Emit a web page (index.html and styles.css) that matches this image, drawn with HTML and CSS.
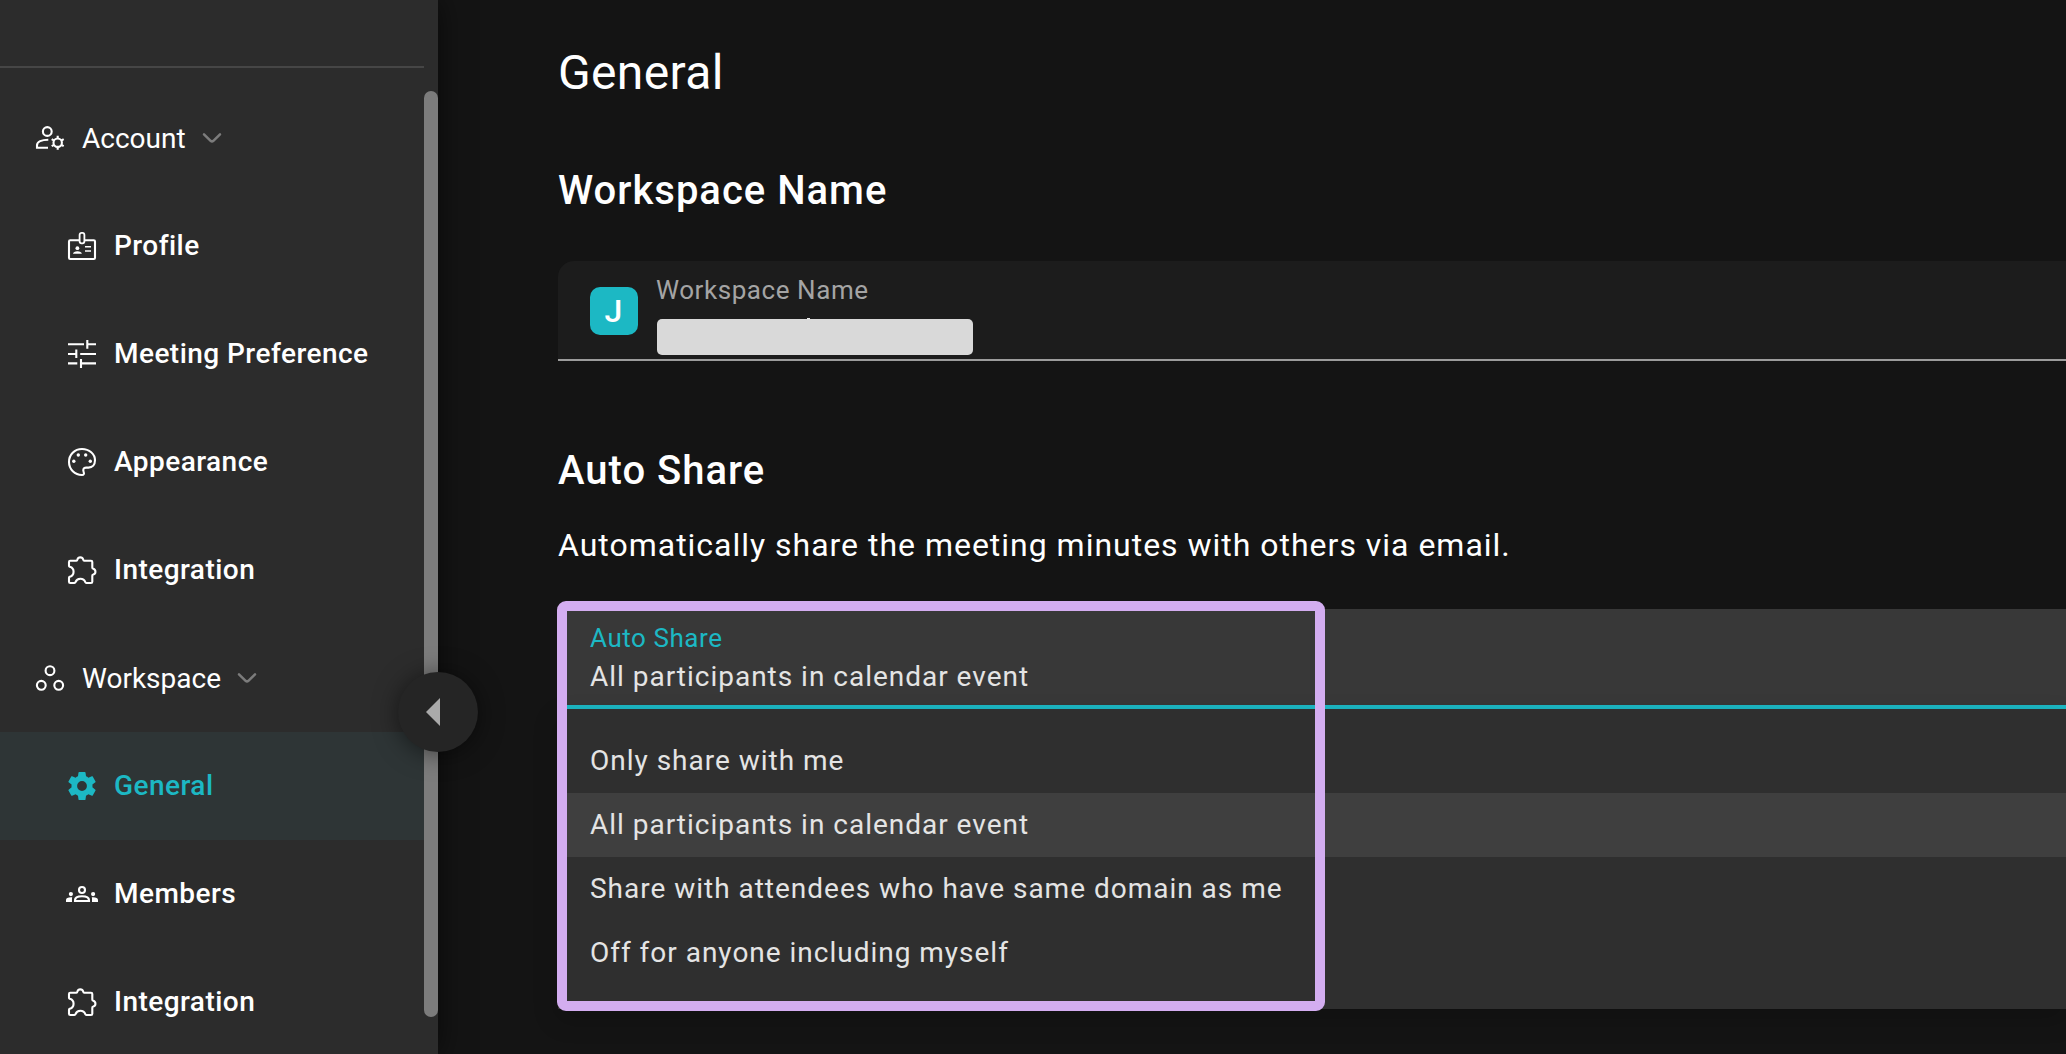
FILE: index.html
```html
<!DOCTYPE html>
<html lang="en">
<head>
<meta charset="utf-8">
<title>General settings</title>
<link rel="stylesheet" href="styles.css">
</head>
<body>
<svg class="defs" width="0" height="0" aria-hidden="true">
  <symbol id="puzzle" viewBox="0 0 32 32"><path d="M4.2 6.7H10.4Q11.2 6.7 11.4 5.6A3 3 0 0 1 17.2 5.6Q17.4 6.7 18.2 6.7H25Q26.3 6.7 26.3 8V13.6Q26.3 14.6 27.2 14.8A3 3 0 0 1 27.2 20.6Q26.3 20.8 26.3 21.8V27.7Q26.3 29 25 29H20.3Q19.6 29 19.3 28.2A5.2 5.2 0 0 0 9.5 28.2Q9.2 29 8.4 29H4.3Q3 29 3 27.7V23.9Q3 23.2 3.8 22.8A5.2 5.2 0 0 0 3.8 12.8Q3 12.4 3 11.7V8Q3 6.7 4.2 6.7Z"/></symbol>
  <symbol id="chevron" viewBox="0 0 20 12"><path d="M2 2.3L8.6 8.8Q10 10 11.4 8.8L18 2.3"/></symbol>
</svg>
<div class="app">
  <aside class="sidebar">
    <nav class="nav">
      <div class="nav-head"></div>
      <a class="group">
        <svg class="icon" viewBox="0 0 32 32"><circle cx="13.3" cy="9.5" r="4.4"/><path d="M14.3 17.7C7.5 17.7 3 19.8 3 23.2V25.7H14"/><circle cx="23.7" cy="20.7" r="4.2"/><path d="M23.7 16.5V13.7M23.7 24.9V27.8M27.3 18.6L29.7 17.2M20.1 18.6L17.7 17.2M27.3 22.8L29.7 24.2M20.1 22.8L17.7 24.2"/></svg>
        <span>Account</span>
        <svg class="chevron"><use href="#chevron"/></svg>
      </a>
      <a class="item">
        <svg class="icon" viewBox="0 0 32 32"><rect x="3" y="10.2" width="26" height="18.8" rx="1.2"/><rect class="clip" x="13.6" y="2.9" width="4.8" height="10.4" rx="2"/><circle class="solid" cx="11.4" cy="18.2" r="1.9"/><path class="solid" d="M7 23.8C7 22 9 21.2 11.4 21.2S15.8 22 15.8 23.8Z"/><path class="thin" d="M19 16.7H25M19 21H25"/></svg>
        <span>Profile</span>
      </a>
      <a class="item">
        <svg class="icon" viewBox="0 0 32 32"><path d="M2 6.3H18M21.3 2V10.7M21.3 6.3H30M2 16H10.3M10.3 11.4V20M14.2 16H30M2 25.4H11.3M15 21V30M15 25.4H30"/></svg>
        <span>Meeting Preference</span>
      </a>
      <a class="item">
        <svg class="icon" viewBox="0 0 32 32"><path d="M16 3C8.5 3 3 8.8 3 16S8.8 29 16 29C17.7 29 18.4 27.9 17.7 26.2C16.7 23.4 17.4 21.6 20 21.6H22.5C26.5 21.6 29 18.6 29 14.3C29 8 23.2 3 16 3Z"/><g class="solid"><circle cx="12.3" cy="9" r="1.7"/><circle cx="19.7" cy="9" r="1.7"/><circle cx="7.8" cy="15.2" r="1.7"/><circle cx="24.3" cy="15.2" r="1.7"/></g></svg>
        <span>Appearance</span>
      </a>
      <a class="item">
        <svg class="icon"><use href="#puzzle"/></svg>
        <span>Integration</span>
      </a>
      <a class="group">
        <svg class="icon" viewBox="0 0 32 32"><circle cx="16" cy="8.7" r="4.4"/><circle cx="7.3" cy="23.3" r="4.4"/><circle cx="24.7" cy="23.3" r="4.4"/></svg>
        <span>Workspace</span>
        <svg class="chevron"><use href="#chevron"/></svg>
      </a>
      <a class="item active">
        <svg class="icon" viewBox="0 0 32 32"><path class="solid" transform="translate(-.8 -.8) scale(1.4)" d="M12 15.5A3.5 3.5 0 0 1 8.5 12 3.5 3.5 0 0 1 12 8.5a3.5 3.5 0 0 1 3.5 3.5 3.5 3.5 0 0 1-3.5 3.5m7.43-2.53c.04-.32.07-.64.07-.97s-.03-.66-.07-1l2.11-1.63c.19-.15.24-.42.12-.64l-2-3.46c-.12-.22-.39-.31-.61-.22l-2.49 1c-.52-.39-1.06-.73-1.69-.98l-.37-2.65A.506.506 0 0 0 14 2h-4c-.25 0-.46.18-.5.42l-.37 2.65c-.63.25-1.17.59-1.69.98l-2.49-1c-.22-.09-.49 0-.61.22l-2 3.46c-.13.22-.07.49.12.64L4.57 11c-.04.34-.07.67-.07 1s.03.65.07.97l-2.11 1.66c-.19.15-.25.42-.12.64l2 3.46c.12.22.39.3.61.22l2.49-1.01c.52.4 1.06.74 1.69.99l.37 2.65c.04.24.25.42.5.42h4c.25 0 .46-.18.5-.42l.37-2.65c.63-.26 1.17-.59 1.69-.99l2.49 1.01c.22.08.49 0 .61-.22l2-3.46c.12-.22.07-.49-.12-.64z"/></svg>
        <span>General</span>
      </a>
      <a class="item">
        <svg class="icon" viewBox="0 0 32 32"><circle cx="16" cy="12" r="3"/><path d="M9 23V22.2C9 19.6 12.3 18.2 16 18.2S23 19.6 23 22.2V23Z"/><g class="solid"><circle cx="4.9" cy="16.1" r="2.1"/><circle cx="27.1" cy="16.1" r="2.1"/><path d="M0 24V22C0 20 2.4 19 6.2 19.3C5.9 20.5 6 22 6 24Z"/><path d="M32 24V22C32 20 29.6 19 25.8 19.3C26.1 20.5 26 22 26 24Z"/></g></svg>
        <span>Members</span>
      </a>
      <a class="item">
        <svg class="icon"><use href="#puzzle"/></svg>
        <span>Integration</span>
      </a>
    </nav>
    <div class="scrollbar"><div class="thumb"></div></div>
    <button class="collapse" aria-label="Collapse sidebar"><svg width="14" height="28" viewBox="0 0 14 28"><path d="M14 0V28L0 14Z"/></svg></button>
  </aside>

  <main class="main">
    <h1>General</h1>

    <h2>Workspace Name</h2>
    <div class="name-field">
      <div class="badge">J</div>
      <div class="name-body">
        <div class="label">Workspace Name</div>
        <div class="redacted"></div>
      </div>
    </div>

    <h2>Auto Share</h2>
    <p class="description">Automatically share the meeting minutes with others via email.</p>
    <div class="select">
      <div class="select-field">
        <div class="label">Auto Share</div>
        <div class="value">All participants in calendar event</div>
      </div>
      <div class="menu">
        <div class="option">Only share with me</div>
        <div class="option selected">All participants in calendar event</div>
        <div class="option">Share with attendees who have same domain as me</div>
        <div class="option">Off for anyone including myself</div>
      </div>
      <div class="highlight"></div>
    </div>
  </main>
</div>
</body>
</html>
```

FILE: styles.css
```css
* { box-sizing: border-box; }

body {
  margin: 0;
  background: #141414;
  color: #fff;
  font-family: Roboto, "Liberation Sans", sans-serif;
  font-size: 28px;
}

.defs { position: absolute; }

.app {
  display: flex;
  height: 1054px;
  overflow: hidden;
}

/* Sidebar */
.sidebar {
  position: relative;
  z-index: 1;
  display: flex;
  flex: none;
  width: 438px;
  background: #2c2c2c;
  box-shadow: 0 0 28px rgba(0, 0, 0, .6);
}

.nav { width: 424px; }

.nav-head {
  height: 68px;
  margin-bottom: 16px;
  border-bottom: 2px solid #464646;
}

.group,
.item {
  display: flex;
  align-items: center;
  height: 108px;
  gap: 16px;
}

.group { padding-left: 34px; }

.item {
  padding-left: 66px;
  font-weight: 500;
  letter-spacing: .46px;
}

.item span {
  padding-bottom: 1px;
}

.item.active {
  background: #2e3536;
  color: #1cb8c4;
}

.icon {
  flex: none;
  width: 32px;
  height: 32px;
  fill: none;
  stroke: currentColor;
  stroke-width: 2.1;
}

.icon .solid { fill: currentColor; stroke: none; }
.icon .thin { stroke-width: 1.5; }
.icon .clip { fill: #2c2c2c; stroke-width: 1.8; }

.chevron {
  width: 20px;
  height: 12px;
  fill: none;
  stroke: #7c7c7c;
  stroke-width: 2.5;
  stroke-linecap: round;
}

.scrollbar {
  width: 14px;
  padding-top: 91px;
}

.thumb {
  height: 926px;
  border-radius: 7px;
  background: #7c7c7c;
}

.collapse {
  position: absolute;
  top: 672px;
  right: -40px;
  display: flex;
  align-items: center;
  width: 80px;
  height: 80px;
  padding: 0 0 0 28px;
  border: 0;
  border-radius: 50%;
  background: #252525;
  box-shadow: 0 2px 24px rgba(0, 0, 0, .5);
}

.collapse svg { fill: #aaa; }

/* Content */
.main {
  flex: 1;
  min-width: 0;
  padding: 41px 0 0 120px;
}

h1, h2, p { margin: 0; }

h1 {
  font-size: 48px;
  font-weight: 400;
  line-height: 64px;
  letter-spacing: .35px;
}

h2 {
  font-size: 40px;
  font-weight: 500;
  line-height: 64px;
  letter-spacing: 1px;
}

h1 + h2 { margin: 54px 0 38px; }

.label {
  font-size: 26px;
  line-height: 32px;
  letter-spacing: .56px;
}

.name-field {
  display: flex;
  height: 100px;
  margin-bottom: 78px;
  padding: 13px 0 0 32px;
  gap: 18px;
  border-bottom: 2px solid #9c9c9c;
  border-top-left-radius: 16px;
  background: #1c1c1c;
}

.name-field .label { color: #a4a4a4; }

.badge {
  width: 48px;
  height: 48px;
  margin-top: 13px;
  border-radius: 10px;
  background: #1cb8c4;
  font-size: 32px;
  font-weight: 500;
  line-height: 48px;
  text-align: center;
  text-indent: -1px;
}

/* Masked value; the tip of one ascender shows above the mask */
.redacted {
  position: relative;
  width: 316px;
  height: 36px;
  margin: 13px 0 0 1px;
  border-radius: 5px;
  background: #d9d9d9;
}

.redacted::before {
  content: "";
  position: absolute;
  top: -1px;
  left: 150px;
  width: 3px;
  height: 1px;
  background: #eee;
}

.description {
  margin: 14px 0 36px;
  font-size: 32px;
  line-height: 56px;
  letter-spacing: .985px;
}

.select {
  position: relative;
  color: #e4e4e4;
  letter-spacing: .985px;
}

.select-field {
  height: 100px;
  padding: 13px 0 0 32px;
  border-bottom: 4px solid #1cb8c4;
  background: #383838;
}

.select-field .label { color: #1cb8c4; }

.value {
  margin-top: 3px;
  line-height: 40px;
}

.menu {
  height: 300px;
  padding-top: 20px;
  background: #2f2f2f;
  box-shadow: 0 10px 24px rgba(0, 0, 0, .2);
}

.option {
  height: 64px;
  padding-left: 32px;
  line-height: 64px;
}

.option.selected { background: #3f3f3f; }

/* Callout frame drawn over the open select */
.highlight {
  position: absolute;
  top: -8px;
  left: -1px;
  width: 768px;
  height: 410px;
  border: 10px solid #d3adf0;
  border-radius: 9px;
}
```
